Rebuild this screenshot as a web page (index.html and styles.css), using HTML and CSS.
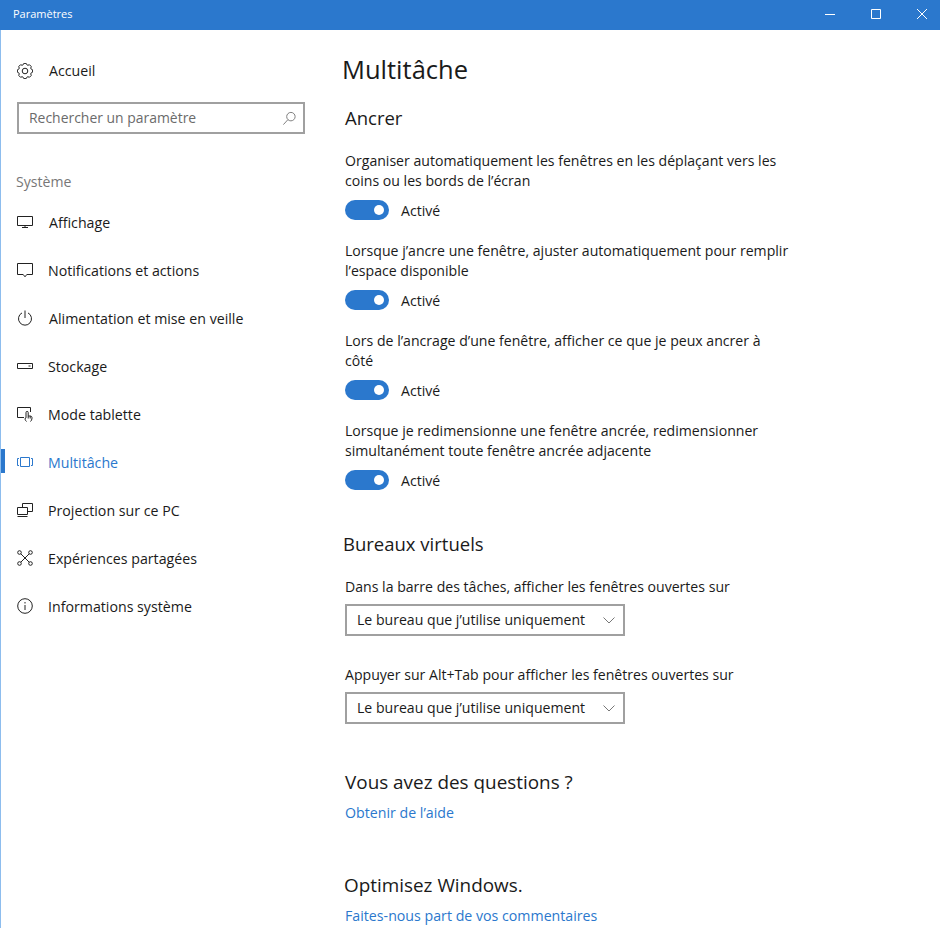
FILE: index.html
```html
<!DOCTYPE html>
<html lang="fr">
<head>
<meta charset="utf-8">
<title>Paramètres</title>
<link rel="stylesheet" href="styles.css">
</head>
<body>
<div class="window">
  <header class="titlebar">
    <span class="app-title">Paramètres</span>
    <div class="controls">
      <svg class="ctl" viewBox="0 0 46 30"><path d="M23 14.500h10" /></svg>
      <svg class="ctl" viewBox="0 0 46 30"><path d="M23.500 9.500h9v9h-9z" /></svg>
      <svg class="ctl" viewBox="0 0 46 30"><path d="M23 9l10 10M33 9L23 19" /></svg>
    </div>
  </header>
  <div class="body">
    <aside class="sidebar">
      <a class="home">
        <svg class="ico" viewBox="0 0 16 16"><circle cx="8" cy="8" r="2.800"/><path transform="translate(8 8)" d="M2.200-5.900L2.620-5.730 4.530-6.220 6.220-4.530 5.730-2.620 5.900-2.200 7.600-1.200V1.200L5.900 2.200 5.730 2.620 6.220 4.530 4.530 6.220 2.620 5.730 2.200 5.900 1.200 7.600H-1.200L-2.200 5.900-2.620 5.730-4.530 6.220-6.220 4.530-5.730 2.620-5.900 2.200-7.600 1.200V-1.200L-5.900-2.200-5.730-2.620-6.220-4.530-4.530-6.220-2.620-5.730-2.200-5.900-1.200-7.600H1.200z"/></svg>
        <span>Accueil</span>
      </a>
      <div class="search">
        <span>Rechercher un paramètre</span>
        <svg class="search-ico" viewBox="0 0 16 16"><circle cx="9.500" cy="6" r="4.500"/><path d="M6.300 9.200L1.500 14.500"/></svg>
      </div>
      <div class="group">Système</div>
      <nav class="nav">
        <a class="item nudge"><svg class="ico" viewBox="0 0 16 16"><path d="M.5 2.500h15v9H.5zM8 11.500v2M5 13.500h6"/></svg><span>Affichage</span></a>
        <a class="item"><svg class="ico" viewBox="0 0 16 16"><path d="M.5 1.500h15v11H9.800L8 14.800 6.200 12.500H.5z"/></svg><span>Notifications et actions</span></a>
        <a class="item nudge"><svg class="ico" viewBox="0 0 16 16"><path d="M8 .5v7.500M5 2.900a6.500 6.500 0 1 0 6 0"/></svg><span>Alimentation et mise en veille</span></a>
        <a class="item"><svg class="ico" viewBox="0 0 16 16"><path d="M.5 5.500h15v5H.5zM11.500 8h2"/></svg><span>Stockage</span></a>
        <a class="item"><svg class="ico" viewBox="0 0 16 16"><path d="M7 11.500H.5v-10h13v4.500M9.500 15.500c-.8-.7-1.500-1.800-1.500-3l1-.6V6.500a1.100 1.100 0 0 1 2.200 0v3.500h2c1.200 0 1.800.7 1.800 1.800 0 1.600-.7 3-1.500 3.700M11.200 10v2.500M13.200 10v2.500"/></svg><span>Mode tablette</span></a>
        <a class="item active"><svg class="ico" viewBox="0 0 16 16"><path d="M3.500 3.500h9v9h-9zM2 4.500H.5v7H2M14 4.500h1.500v7H14"/></svg><span>Multitâche</span></a>
        <a class="item"><svg class="ico" viewBox="0 0 16 16"><path d="M5.500 5V1.500h10v8H11M.5 5.500h10v7H.5zM.5 14.500h10"/></svg><span>Projection sur ce PC</span></a>
        <a class="item"><svg class="ico" viewBox="0 0 16 16"><circle cx="2.500" cy="2.500" r="1.800"/><circle cx="13.500" cy="2.500" r="1.800"/><circle cx="2.500" cy="13.500" r="1.800"/><circle cx="13.500" cy="13.500" r="1.800"/><path d="M3.800 3.800l8.400 8.400M12.200 3.800l-8.400 8.400"/></svg><span>Expériences partagées</span></a>
        <a class="item"><svg class="ico" viewBox="0 0 16 16"><circle cx="8" cy="8" r="7.300"/><path d="M8 7v5M8 4v1.500"/></svg><span>Informations système</span></a>
      </nav>
    </aside>
    <main class="main">
      <h1>Multitâche</h1>
      <h2 class="anchor-title">Ancrer</h2>
      <section class="setting">
        <p>Organiser automatiquement les fenêtres en les déplaçant vers les<br>coins ou les bords de l’écran</p>
        <div class="toggle-row"><span class="toggle"></span><span>Activé</span></div>
      </section>
      <section class="setting">
        <p>Lorsque j’ancre une fenêtre, ajuster automatiquement pour remplir<br>l’espace disponible</p>
        <div class="toggle-row"><span class="toggle"></span><span>Activé</span></div>
      </section>
      <section class="setting">
        <p>Lors de l’ancrage d’une fenêtre, afficher ce que je peux ancrer à<br>côté</p>
        <div class="toggle-row"><span class="toggle"></span><span>Activé</span></div>
      </section>
      <section class="setting">
        <p>Lorsque je redimensionne une fenêtre ancrée, redimensionner<br>simultanément toute fenêtre ancrée adjacente</p>
        <div class="toggle-row"><span class="toggle"></span><span>Activé</span></div>
      </section>
      <h2 class="virtual-title">Bureaux virtuels</h2>
      <p class="label">Dans la barre des tâches, afficher les fenêtres ouvertes sur</p>
      <div class="select"><span>Le bureau que j’utilise uniquement</span><svg class="chev" viewBox="0 0 12 7"><path d="M.5.5L6 6l5.500-5.500"/></svg></div>
      <p class="label label-second">Appuyer sur Alt+Tab pour afficher les fenêtres ouvertes sur</p>
      <div class="select"><span>Le bureau que j’utilise uniquement</span><svg class="chev" viewBox="0 0 12 7"><path d="M.5.5L6 6l5.500-5.500"/></svg></div>
      <h2 class="help-title">Vous avez des questions ?</h2>
      <a class="link">Obtenir de l’aide</a>
      <h2 class="opt-title">Optimisez Windows.</h2>
      <a class="link">Faites-nous part de vos commentaires</a>
    </main>
  </div>
</div>
</body>
</html>
```
FILE: styles.css
```css
* { box-sizing: border-box; }
html, body { margin: 0; height: 100%; overflow: hidden; background: #fff; }
body { font-family: "Open Sans", "Noto Sans", sans-serif; font-size: 14.100px; color: #1a1a1a; }
.window { height: 928px; display: flex; flex-direction: column; border-left: 1px solid #8dbdee; }
.titlebar { flex: none; height: 30px; margin-left: -1px; background: #2b78cd; color: #fff; display: flex; align-items: center; justify-content: space-between; padding-left: 13px; }
.app-title { font-size: 11px; line-height: 28px; height: 30px; }
.controls { display: flex; }
.ctl { width: 46px; height: 30px; fill: none; stroke: #fff; stroke-width: 1; }
.body { flex: 1; display: flex; min-height: 0; }
svg { display: block; }
.ico { width: 16px; height: 16px; flex: none; fill: none; stroke: #222; stroke-width: 1; }
.sidebar { flex: none; width: 342px; }
.home { display: flex; align-items: center; gap: 16px; height: 24px; margin: 29px 0 0 16px; font-size: 14.200px; }
.home span { line-height: 22px; }
.search { width: 288px; height: 32px; margin: 19px 0 0 16px; border: 2px solid #a0a0a0; display: flex; align-items: center; justify-content: space-between; padding: 0 6px 0 10px; color: #6b6b6b; }
.search span { font-size: 13.950px; line-height: 28px; height: 28px; }
.search-ico { width: 15px; height: 15px; fill: none; stroke: #777; stroke-width: 1; }
.group { margin: 36px 0 0 15px; height: 24px; line-height: 24px; color: #777; }
.nav { margin-top: 4px; font-size: 14.200px; }
.item { display: flex; align-items: center; gap: 15px; height: 48px; padding-left: 16px; }
.item.nudge { gap: 16px; }
.item.active { color: #2b78cd; border-left: 4px solid #2b78cd; padding-left: 12px; padding-top: 2px; height: 24px; margin-top: 11px; margin-bottom: 13px; }
.item.active .ico { stroke: #2b78cd; }
.main { flex: 1; padding-left: 2px; min-width: 0; }
h1 { margin: 19px 0 0 -3px; font-size: 25.500px; font-weight: 400; line-height: 40px; height: 40px; }
h2 { font-size: 18.500px; font-weight: 400; margin: 0; line-height: 28px; height: 28px; }
.anchor-title { margin-top: 15px; }
.setting { height: 90px; }
.setting:first-of-type { margin-top: 19px; }
.setting p { margin: 0; line-height: 20px; height: 40px; }
.toggle-row { display: flex; align-items: center; gap: 12px; height: 20px; margin-top: 9px; }
.toggle { width: 44px; height: 20px; border-radius: 10px; background: #2b78cd; position: relative; flex: none; }
.toggle::after { content: ""; position: absolute; right: 5px; top: 5px; width: 10px; height: 10px; border-radius: 50%; background: #fff; }
.virtual-title { margin: 19px 0 0 -2px; }
.label { margin: 19px 0 0; line-height: 20px; height: 20px; }
.label-second { margin-top: 29px; }
.select { width: 280px; height: 32px; margin-top: 7px; border: 2px solid #a0a0a0; display: flex; align-items: center; justify-content: space-between; padding: 0 8px 0 10px; }
.select span { line-height: 28px; height: 28px; }
.chev { width: 12px; height: 7px; fill: none; stroke: #777; stroke-width: 1; }
.help-title { margin-top: 44px; font-size: 18.900px; }
.link { display: block; color: #2b78cd; font-size: 14.200px; line-height: 20px; height: 20px; margin-top: 7px; }
.opt-title { margin: 48px 0 0 -1px; font-size: 18.900px; }
```
